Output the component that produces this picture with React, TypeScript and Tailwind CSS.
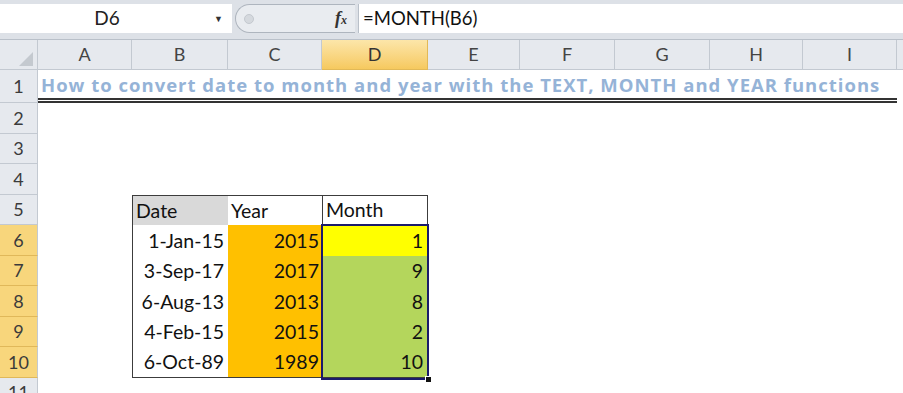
import React from "react";

const cols = [
  { l: "A", w: "w-[94px]" },
  { l: "B", w: "w-[96px]" },
  { l: "C", w: "w-[94px]" },
  { l: "D", w: "w-[106px]" },
  { l: "E", w: "w-[92px]" },
  { l: "F", w: "w-[95px]" },
  { l: "G", w: "w-[95px]" },
  { l: "H", w: "w-[93px]" },
  { l: "I", w: "w-[94px]" },
];

const heights: Record<number, string> = {
  1: "h-[33px]",
  2: "h-[31px]",
  3: "h-[30px]",
  4: "h-[31px]",
  5: "h-[30px]",
  6: "h-[31px]",
  7: "h-[30px]",
  8: "h-[31px]",
  9: "h-[30px]",
  10: "h-[31px]",
  11: "h-[30px]",
};

const data = [
  { d: "1-Jan-15", y: "2015", m: "1" },
  { d: "3-Sep-17", y: "2017", m: "9" },
  { d: "6-Aug-13", y: "2013", m: "8" },
  { d: "4-Feb-15", y: "2015", m: "2" },
  { d: "6-Oct-89", y: "1989", m: "10" },
];

function RowHeader({ n }: { n: number }) {
  const hi = n >= 6 && n <= 10;
  return (
    <div
      className={`w-[38px] shrink-0 h-full flex items-center justify-center border-r border-b border-[#c3c9d1] text-[18px] text-[#3b3b3b] ${
        hi ? "bg-[#f8d67c] border-b-[#e0b85a]" : "bg-[#e6e9ee]"
      }`}
    >
      {n}
    </div>
  );
}

export default function App() {
  return (
    <div
      className="relative w-[903px] h-[393px] overflow-hidden bg-white"
      style={{ fontFamily: "Lato, 'Open Sans', Arial, sans-serif" }}
    >
      {/* formula bar */}
      <div className="h-[40px] bg-[#dde1e7] border-b border-[#b9c0c9] pt-[4px] flex items-start">
        <div className="w-[232px] h-[29px] bg-white flex items-center relative">
          <span className="w-[214px] text-center text-[19px] text-[#222]">D6</span>
          <span className="text-[9px] text-[#333]">▼</span>
        </div>
        <div className="w-[126px] h-[29px] flex items-center pl-[3px]">
          <div className="w-[120px] h-[29px] rounded-l-[15px] border border-r-0 border-[#aeb5be] bg-[#e9ecf0] flex items-center">
            <span className="ml-[8px] w-[10px] h-[10px] rounded-full bg-[#d5d9de] border border-[#c4c9cf]" />
            <span
              className="ml-auto mr-[8px] italic font-bold text-[18px] text-[#333]"
              style={{ fontFamily: "'Liberation Serif', serif" }}
            >
              f<span className="text-[12px]">x</span>
            </span>
          </div>
        </div>
        <div className="flex-1 h-[29px] bg-white border-l border-[#b9c0c9] flex items-center pl-[4px] text-[18.5px] text-[#111]">
          =MONTH(B6)
        </div>
      </div>

      {/* column headers */}
      <div className="flex h-[30px] bg-[#e6e9ee]">
        <div className="w-[38px] shrink-0 h-full border-r border-b border-[#c3c9d1] relative bg-[#e6e9ee]">
          <div
            className="absolute right-[4px] bottom-[3px] w-[14px] h-[14px] bg-[#c4c9cf]"
            style={{ clipPath: "polygon(100% 0, 100% 100%, 0 100%)" }}
          />
        </div>
        {cols.map((c) => (
          <div
            key={c.l}
            className={`${c.w} shrink-0 h-full flex items-center justify-center border-r border-b text-[18px] ${
              c.l === "D"
                ? "bg-linear-to-b from-[#fce6a9] to-[#f6c95e] border-[#e2b957] text-[#333]"
                : "border-[#c3c9d1] text-[#444]"
            }`}
          >
            {c.l}
          </div>
        ))}
        <div className="flex-1 border-b border-[#c3c9d1]" />
      </div>

      {/* rows */}
      {Array.from({ length: 11 }, (_, i) => i + 1).map((n) => (
        <div key={n} className={`flex ${heights[n]}`}>
          <RowHeader n={n} />
          {n === 1 && (
            <div className="w-[859px] h-full border-b-[5px] border-double border-[#333] flex items-center pl-[3px] pt-[2px]">
              <span
                className="whitespace-nowrap font-bold text-[18.5px] tracking-[1px] text-[#95b3d7]"
                style={{ fontFamily: "'Open Sans', Lato, sans-serif" }}
              >
                How to convert date to month and year with the TEXT, MONTH and YEAR functions
              </span>
            </div>
          )}
          {n === 5 && (
            <>
              <div className="w-[94px] shrink-0" />
              <div className="w-[96px] shrink-0 h-full bg-[#d9d9d9] border-l border-t border-[#3c3c3c] flex items-center pl-[3px] text-[19.5px] text-[#111]">
                Date
              </div>
              <div className="w-[94px] shrink-0 h-full border-t border-[#3c3c3c] flex items-center pl-[3px] text-[19.5px] text-[#111]">
                Year
              </div>
              <div className="w-[106px] shrink-0 h-full border border-[#3c3c3c] flex items-center pl-[3px] text-[19.5px] text-[#111]">
                Month
              </div>
            </>
          )}
          {n >= 6 && n <= 10 && (
            <>
              <div className="w-[94px] shrink-0" />
              <div
                className={`w-[96px] shrink-0 h-full border-l border-[#3c3c3c] flex items-center justify-end pr-[4px] text-[19.5px] text-[#111] ${
                  n === 10 ? "border-b" : ""
                }`}
              >
                {data[n - 6].d}
              </div>
              <div
                className={`w-[94px] shrink-0 h-full bg-[#ffc000] border-[#3c3c3c] flex items-center justify-end pr-[3px] text-[19.5px] text-[#111] ${
                  n === 10 ? "border-b" : ""
                }`}
              >
                {data[n - 6].y}
              </div>
              <div
                className={`w-[106px] shrink-0 h-full border-l border-r border-[#3c3c3c] flex items-center justify-end pr-[4px] text-[19.5px] text-[#111] ${
                  n === 6 ? "bg-[#ffff00]" : "bg-[#b4d65c]"
                } ${n === 10 ? "border-b" : ""}`}
              >
                {data[n - 6].m}
              </div>
            </>
          )}
        </div>
      ))}

      {/* selection D6:D10 */}
      <div className="absolute left-[321px] top-[224px] w-[108px] h-[156px] border-2 border-[#1b1b6b] pointer-events-none" />
      <div className="absolute left-[425px] top-[376px] w-[7px] h-[7px] bg-[#111] border border-white" />
    </div>
  );
}
